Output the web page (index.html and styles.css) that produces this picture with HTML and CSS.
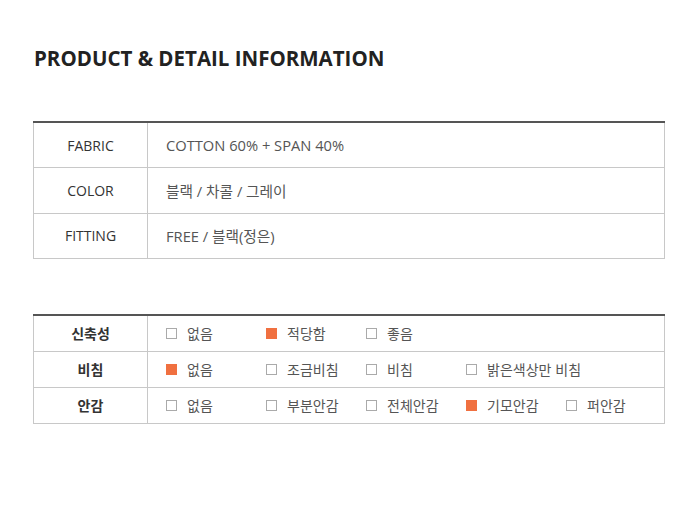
FILE: index.html
```html
<!DOCTYPE html>
<html lang="ko">
<head>
<meta charset="utf-8">
<title>Product &amp; Detail Information</title>
<link rel="stylesheet" href="styles.css">
</head>
<body>
<div class="page">
  <h1 class="title">PRODUCT &amp; DETAIL INFORMATION</h1>

  <table class="info">
    <tr><th>FABRIC</th><td>COTTON 60% + SPAN 40%</td></tr>
    <tr><th>COLOR</th><td>블랙 / 차콜 / 그레이</td></tr>
    <tr><th>FITTING</th><td>FREE / 블랙(정은)</td></tr>
  </table>

  <table class="detail">
    <tr>
      <th>신축성</th>
      <td><div class="opts">
        <span class="opt"><i class="box"></i>없음</span>
        <span class="opt"><i class="box on"></i>적당함</span>
        <span class="opt"><i class="box"></i>좋음</span>
      </div></td>
    </tr>
    <tr>
      <th>비침</th>
      <td><div class="opts">
        <span class="opt"><i class="box on"></i>없음</span>
        <span class="opt"><i class="box"></i>조금비침</span>
        <span class="opt"><i class="box"></i>비침</span>
        <span class="opt wide"><i class="box"></i>밝은색상만 비침</span>
      </div></td>
    </tr>
    <tr>
      <th>안감</th>
      <td><div class="opts">
        <span class="opt"><i class="box"></i>없음</span>
        <span class="opt"><i class="box"></i>부분안감</span>
        <span class="opt"><i class="box"></i>전체안감</span>
        <span class="opt"><i class="box on"></i>기모안감</span>
        <span class="opt"><i class="box"></i>퍼안감</span>
      </div></td>
    </tr>
  </table>
</div>
</body>
</html>
```

FILE: styles.css
```css
html, body {
  margin: 0;
  padding: 0;
  background: #ffffff;
}

.page {
  padding: 44px 35px 0 33px;
  font-family: "Open Sans", "Noto Sans CJK KR", sans-serif;
}

.title {
  margin: 0 0 0 1px;
  font-size: 20.5px;
  line-height: 28px;
  font-weight: 700;
  color: #222;
}

table {
  width: 632px;
  border-collapse: collapse;
  table-layout: fixed;
}

.info {
  margin-top: 49px;
  border-top: 2px solid #555;
}

.info th, .info td,
.detail th, .detail td {
  border: 1px solid #c8c8c8;
  padding: 0;
  font-size: 14px;
}

.info th, .detail th {
  width: 113px;
  text-align: center;
  color: #333;
}

.info th {
  font-weight: 400;
  height: 44.3px;
}

.info td {
  padding-left: 18px;
  color: #555;
  font-size: 14.7px;
}

.detail {
  margin-top: 55px;
  border-top: 2px solid #555;
}

.detail th {
  font-family: "Noto Sans CJK KR", sans-serif;
  font-weight: 700;
  font-size: 14px;
  height: 35px;
}

.detail td {
  padding-left: 18px;
  color: #555;
  font-family: "Noto Sans CJK KR", sans-serif;
}

.opts {
  display: flex;
  align-items: center;
}

.opt {
  width: 100px;
  display: flex;
  align-items: center;
  flex: none;
}

.opt.wide {
  width: 140px;
}

.box {
  width: 9px;
  height: 9px;
  border: 1px solid #aaa;
  margin-right: 10px;
  flex: none;
  box-sizing: content-box;
}

.box.on {
  background: #f07040;
  border-color: #f07040;
}
```
